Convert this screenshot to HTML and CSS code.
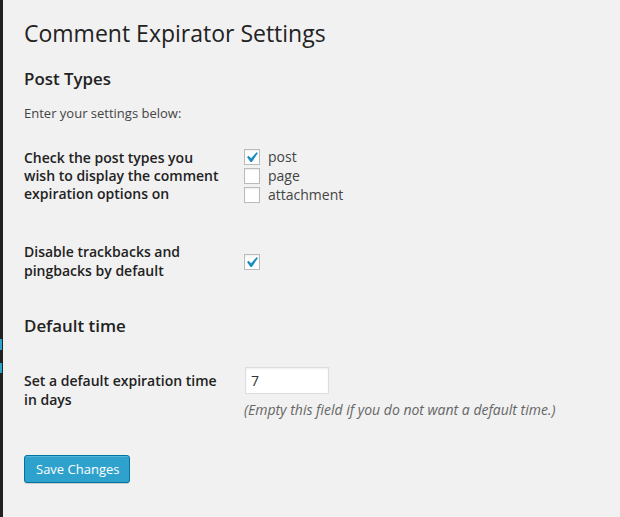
FILE: index.html
```html
<!DOCTYPE html>
<html>
<head>
<meta charset="utf-8">
<link rel="stylesheet" href="styles.css">
</head>
<body>
<div class="admin">
  <div class="menu-edge">
    <div class="edge-mark edge-mark-1"></div>
    <div class="edge-mark edge-mark-2"></div>
  </div>
  <div class="content">
    <div class="wrap">
      <h2 class="page-title">Comment Expirator Settings</h2>
      <h3 class="section-title">Post Types</h3>
      <p class="intro">Enter your settings below:</p>
      <div class="form-table">
        <div class="form-row row-types">
          <div class="row-label">Check the post types you wish to display the comment expiration options on</div>
          <div class="row-field field-types">
            <label class="check-line"><span class="checkbox"><svg class="check-icon" viewBox="0 0 20 20"><path d="M14.83 4.89l1.34.94-5.81 8.38H9.02L5.78 9.67l1.34-1.25 2.57 2.4z"/></svg></span>post</label>
            <label class="check-line"><span class="checkbox"></span>page</label>
            <label class="check-line"><span class="checkbox"></span>attachment</label>
          </div>
        </div>
        <div class="form-row row-center">
          <div class="row-label">Disable trackbacks and pingbacks by default</div>
          <div class="row-field">
            <span class="checkbox"><svg class="check-icon" viewBox="0 0 20 20"><path d="M14.83 4.89l1.34.94-5.81 8.38H9.02L5.78 9.67l1.34-1.25 2.57 2.4z"/></svg></span>
          </div>
        </div>
      </div>
      <h3 class="section-title section-second">Default time</h3>
      <div class="form-table form-table-time">
        <div class="form-row row-time">
          <div class="row-label">Set a default expiration time in days</div>
          <div class="row-field field-time">
            <div class="text-input">7</div>
            <p class="description">(Empty this field if you do not want a default time.)</p>
          </div>
        </div>
      </div>
      <div class="submit">
        <button class="button-primary">Save Changes</button>
      </div>
    </div>
  </div>
</div>
</body>
</html>
```
FILE: styles.css
```css
html, body {
  margin: 0;
  padding: 0;
  height: 100%;
}
body {
  background: #f1f1f1;
  font-family: "Open Sans", "Liberation Sans", sans-serif;
  font-size: 13px;
  color: #444;
  line-height: 1.4em;
}
.admin {
  display: flex;
  min-height: 100%;
}
.menu-edge {
  width: 3px;
  background: #222;
  flex: none;
  display: flex;
  flex-direction: column;
}
.edge-mark {
  width: 2px;
  background: #2ea2cc;
}
.edge-mark-1 {
  margin-top: 339px;
  height: 11px;
}
.edge-mark-2 {
  margin-top: 13px;
  height: 10px;
}
.content {
  flex: 1;
  padding-left: 21px;
}
.wrap {
  padding-top: 10px;
}
.page-title {
  margin: 0;
  padding: 9px 15px 4px 0;
  font-size: 23px;
  font-weight: 400;
  line-height: 29px;
  color: #222;
}
.section-title {
  margin: 15px 0 0;
  font-size: 16.9px;
  font-weight: 600;
  line-height: 1.4;
  color: #222;
}
.intro {
  margin: 13px 0 0;
  font-size: 13px;
}
.form-table {
  margin-top: 7px;
}
.form-row {
  display: flex;
  font-size: 14px;
  line-height: 1.3;
}
.row-label {
  width: 200px;
  padding: 20px 10px 20px 0;
  font-weight: 600;
  color: #222;
  flex: none;
}
.row-field {
  padding: 15px 10px;
  display: flex;
  flex-direction: column;
  justify-content: center;
}
.field-types {
  justify-content: flex-start;
  padding-top: 19px;
}
.check-line {
  display: flex;
  align-items: center;
  height: 19px;
  color: #444;
}
.checkbox {
  width: 14px;
  height: 14px;
  border: 1px solid #bbb;
  background: #fff;
  box-shadow: inset 0 1px 2px rgba(0,0,0,.07);
  margin-right: 8px;
  position: relative;
  flex: none;
}
.check-icon {
  position: absolute;
  left: -4px;
  top: -3px;
  width: 21px;
  height: 21px;
  fill: #1e8cbe;
}
.section-second {
  margin-top: 14px;
}
.form-table-time {
  margin-top: 15px;
}
.field-time {
  justify-content: flex-start;
  padding-top: 15px;
}
.text-input {
  height: 25px;
  margin-left: 1px;
  border: 1px solid #ddd;
  background: #fff;
  box-shadow: inset 0 1px 2px rgba(0,0,0,.07);
  padding: 0 6px 0 5px;
  font-size: 14px;
  line-height: 25px;
  color: #333;
  width: 71px;
}
.description {
  margin: 7px 0 0;
  font-style: italic;
  font-size: 14px;
  color: #666;
}
.submit {
  padding-top: 20px;
}
.button-primary {
  height: 28px;
  padding: 0 10px 1px 11px;
  background: #2ea2cc;
  border: 1px solid #0074a2;
  border-radius: 3px;
  box-shadow: inset 0 1px 0 rgba(120,200,230,.5), 0 1px 0 rgba(0,0,0,.15);
  color: #fff;
  font-family: "Open Sans", "Liberation Sans", sans-serif;
  font-size: 13px;
  line-height: 26px;
}
```
